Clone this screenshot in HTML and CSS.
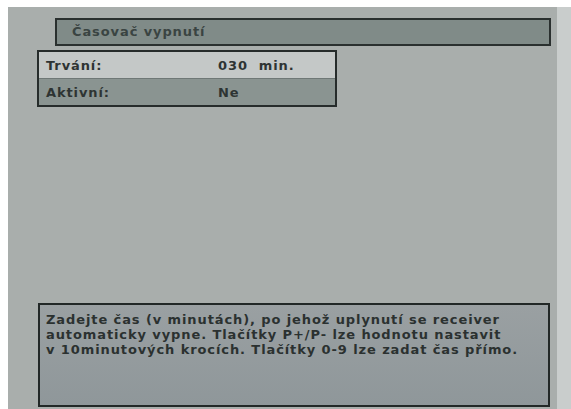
FILE: index.html
```html
<!DOCTYPE html>
<html lang="cs">
<head>
<meta charset="utf-8">
<link rel="stylesheet" href="styles.css">
</head>
<body>
<div class="frame">
  <div class="screen">
    <div class="title">Časovač vypnutí</div>
    <div class="table">
      <div class="row row-light"><span class="label">Trvání:</span><span class="value">030&nbsp; min.</span></div>
      <div class="row row-dark"><span class="label">Aktivní:</span><span class="value">Ne</span></div>
    </div>
    <div class="spacer"></div>
    <div class="help">Zadejte čas (v minutách), po jehož uplynutí se receiver<br>automaticky vypne. Tlačítky P+/P- lze hodnotu nastavit<br>v 10minutových krocích. Tlačítky 0-9 lze zadat čas přímo.</div>
  </div>
  <div class="edge"></div>
</div>
</body>
</html>
```
FILE: styles.css
```css
html, body {
  margin: 0;
  padding: 0;
  background: #ffffff;
  width: 571px;
  height: 409px;
  overflow: hidden;
}
.frame {
  display: flex;
  margin-top: 7px;
  margin-left: 8px;
  height: 402px;
}
.screen {
  width: 549px;
  height: 402px;
  background: #a9aeac;
  display: flex;
  flex-direction: column;
  font-family: "DejaVu Sans", Verdana, sans-serif;
  font-weight: bold;
  font-size: 13px;
  letter-spacing: 0.9px;
  color: #2e3433;
}
.edge {
  width: 14px;
  background: #c9cdcc;
}
.title {
  margin: 11px 0 0 47px;
  width: 496px;
  height: 28px;
  box-sizing: border-box;
  border: 2px solid #2a302f;
  background: #808b88;
  padding-left: 15px;
  line-height: 24px;
  color: #3a4442;
}
.table {
  margin: 4px 0 0 29px;
  width: 300px;
  box-sizing: border-box;
  border: 2px solid #262c2b;
}
.row {
  display: flex;
  height: 26px;
  align-items: center;
  padding-left: 7px;
}
.row-light {
  background: #c4c8c7;
  border-bottom: 1px solid #6f7876;
}
.row-dark {
  background: #8a9491;
}
.label {
  width: 172px;
}
.spacer {
  flex: 1;
}
.help {
  margin: 0 0 2px 30px;
  width: 512px;
  height: 104px;
  box-sizing: border-box;
  border: 2px solid #222827;
  background: linear-gradient(#9aa0a2, #8f979a);
  padding: 7px 6px 0 6px;
  line-height: 15px;
  white-space: nowrap;
  color: #2b3130;
}
```
